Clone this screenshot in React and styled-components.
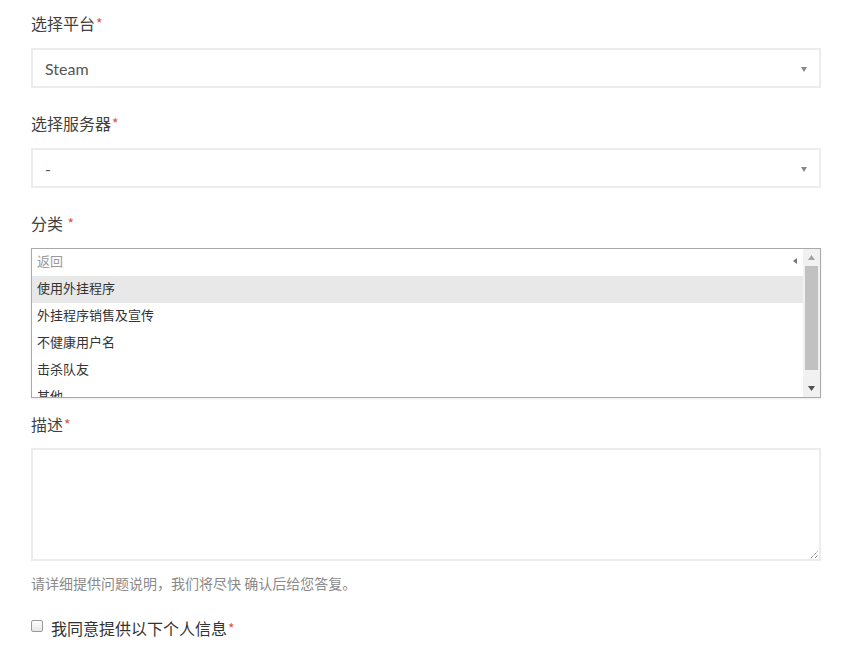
import React from "react";
import styled, { createGlobalStyle } from "styled-components";

const GlobalStyle = createGlobalStyle`
  body {
    margin: 0;
    background: #fff;
    font-family: Lato, "Noto Sans CJK SC", sans-serif;
  }
`;

const options = ["返回", "使用外挂程序", "外挂程序销售及宣传", "不健康用户名", "击杀队友", "其他"];

function App() {
  return (
    <Form>
      <GlobalStyle />
      <Label top={13} lh={21}>
        选择平台<Star>*</Star>
      </Label>
      <SelectBox>
        <span>Steam</span>
        <Caret />
      </SelectBox>

      <Label top={25} lh={21}>
        选择服务器<Star>*</Star>
      </Label>
      <SelectBox>
        <span>-</span>
        <Caret />
      </SelectBox>

      <Label top={24} gap={12}>
        分类 <Star>*</Star>
      </Label>
      <ListBox>
        <Options>
          {options.map((opt, i) => (
            <Option key={opt} muted={i === 0} active={i === 1}>
              {opt}
              {i === 0 && <LeftTip />}
            </Option>
          ))}
        </Options>
        <ScrollBar>
          <ArrowBtn>
            <svg width="7" height="5" viewBox="0 0 7 5">
              <path d="M0 5 L3.5 0 L7 5 Z" fill="#a3a3a3" />
            </svg>
          </ArrowBtn>
          <Track>
            <Thumb />
          </Track>
          <ArrowBtn>
            <svg width="7" height="5" viewBox="0 0 7 5">
              <path d="M0 0 L7 0 L3.5 5 Z" fill="#505050" />
            </svg>
          </ArrowBtn>
        </ScrollBar>
      </ListBox>

      <Label top={15}>
        描述<Star>*</Star>
      </Label>
      <TextArea>
        <Grip>
          <svg width="9" height="9" viewBox="0 0 9 9">
            <path d="M1 8 L8 1 M5 8 L8 5" stroke="#555" strokeWidth="1" strokeDasharray="1 1" />
          </svg>
        </Grip>
      </TextArea>
      <Help>请详细提供问题说明，我们将尽快 确认后给您答复。</Help>

      <CheckRow>
        <Box />
        <span>
          我同意提供以下个人信息<Star>*</Star>
        </span>
      </CheckRow>
    </Form>
  );
}

export default App;

const Form = styled.div`
  width: 790px;
  padding-left: 31px;
  display: flex;
  flex-direction: column;
  color: #444;
`;

const Label = styled.div`
  margin-top: ${(p) => p.top}px;
  margin-bottom: ${(p) => p.gap || 11}px;
  height: 24px;
  line-height: ${(p) => p.lh || 22}px;
  font-size: 16px;
  font-family: "Noto Sans CJK SC", sans-serif;
  color: #3f3f3f;
`;

const Star = styled.span`
  color: #d9534f;
  font-size: 14px;
  margin-left: 1px;
  vertical-align: 1px;
`;

const SelectBox = styled.div`
  box-sizing: border-box;
  height: 40px;
  border: 2px solid #ececec;
  background: #fff;
  display: flex;
  align-items: center;
  justify-content: space-between;
  padding: 0 12px 0 12px;
  font-size: 16px;
  color: #555;
  font-family: Lato, "Noto Sans CJK SC", sans-serif;
`;

const Caret = styled.span`
  width: 0;
  height: 0;
  border-left: 3px solid transparent;
  border-right: 3px solid transparent;
  border-top: 5px solid #888;
  margin-top: 2px;
`;

const ListBox = styled.div`
  box-sizing: border-box;
  height: 150px;
  border: 1px solid #a9a9a9;
  display: flex;
  overflow: hidden;
  box-shadow: 0 1px 2px rgba(0, 0, 0, 0.08);
`;

const Options = styled.div`
  flex: 1;
  display: flex;
  flex-direction: column;
`;

const Option = styled.div`
  position: relative;
  box-sizing: border-box;
  flex: 0 0 27px;
  line-height: 23px;
  padding-left: 5px;
  font-size: 13px;
  font-family: "Noto Sans CJK SC", sans-serif;
  color: ${(p) => (p.muted ? "#9a9a9a" : "#333")};
  background: ${(p) => (p.active ? "#e8e8e8" : "transparent")};
`;

const LeftTip = styled.span`
  position: absolute;
  right: 6px;
  top: 9px;
  width: 0;
  height: 0;
  border-top: 3px solid transparent;
  border-bottom: 3px solid transparent;
  border-right: 4px solid #777;
`;

const ScrollBar = styled.div`
  width: 17px;
  display: flex;
  flex-direction: column;
  background: #f1f1f1;
`;

const ArrowBtn = styled.div`
  height: 17px;
  display: flex;
  align-items: center;
  justify-content: center;
`;

const Track = styled.div`
  flex: 1;
  padding: 0 2px;
`;

const Thumb = styled.div`
  height: 104px;
  background: #c1c1c1;
`;

const TextArea = styled.div`
  box-sizing: border-box;
  height: 113px;
  border: 2px solid #ececec;
  background: #fff;
  display: flex;
  align-items: flex-end;
  justify-content: flex-end;
`;

const Grip = styled.div`
  width: 10px;
  height: 10px;
  display: flex;
  align-items: center;
  justify-content: center;
`;

const Help = styled.div`
  margin-top: 11px;
  height: 22px;
  line-height: 22px;
  font-size: 14px;
  font-family: "Noto Sans CJK SC", sans-serif;
  color: #8a8a8a;
`;

const CheckRow = styled.label`
  margin-top: 22px;
  display: flex;
  align-items: center;
  gap: 8px;
  font-size: 16px;
  font-family: "Noto Sans CJK SC", sans-serif;
  color: #333;
  line-height: 24px;
`;

const Box = styled.span`
  box-sizing: border-box;
  width: 12px;
  height: 12px;
  border: 1px solid #9a9a9a;
  border-radius: 2px;
  background: linear-gradient(#fdfdfd, #e6e6e6);
  margin-top: -4px;
`;
